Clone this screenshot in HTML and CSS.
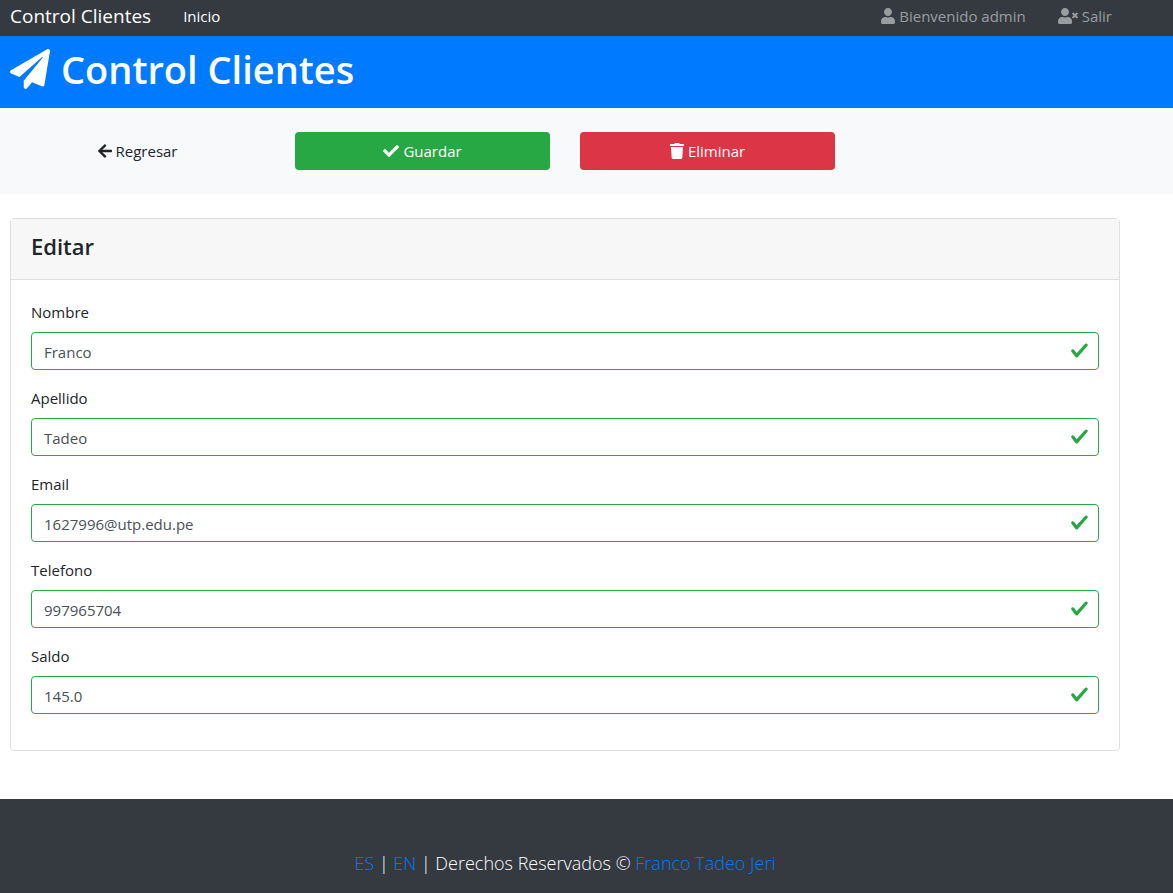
FILE: index.html
```
<!DOCTYPE html>
<html lang="es">
<head>
<meta charset="utf-8">
<title>Control Clientes</title>
<link rel="stylesheet" href="styles.css">
</head>
<body>
<nav class="navbar">
  <div class="container navbar-inner">
    <a class="brand" href="#">Control Clientes</a>
    <a class="nav-link active" href="#">Inicio</a>
    <div class="nav-user">
      <a class="nav-link" href="#"><svg class="icon icon-user" viewBox="0 0 448 512" aria-hidden="true"><path d="M224 256c70.700 0 128-57.300 128-128S294.700 0 224 0 96 57.300 96 128s57.300 128 128 128zm89.600 32h-16.700c-22.200 10.200-46.900 16-72.900 16s-50.600-5.800-72.900-16h-16.700C60.200 288 0 348.200 0 422.400V464c0 26.500 21.500 48 48 48h352c26.500 0 48-21.500 48-48v-41.600c0-74.200-60.200-134.400-134.400-134.400z"/></svg><span>Bienvenido admin</span></a>
      <a class="nav-link" href="#"><svg class="icon icon-exit" viewBox="0 0 640 512" aria-hidden="true"><path d="M589.600 240l45.600-45.600c6.300-6.300 6.300-16.500 0-22.800l-22.800-22.800c-6.300-6.300-16.500-6.300-22.800 0L544 194.400l-45.600-45.600c-6.300-6.300-16.500-6.300-22.800 0l-22.800 22.800c-6.300 6.300-6.300 16.500 0 22.800l45.600 45.600-45.600 45.600c-6.300 6.300-6.300 16.500 0 22.800l22.800 22.800c6.300 6.300 16.500 6.300 22.800 0l45.600-45.600 45.600 45.600c6.300 6.300 16.500 6.300 22.800 0l22.800-22.800c6.300-6.300 6.300-16.500 0-22.800L589.600 240zM224 256c70.700 0 128-57.300 128-128S294.700 0 224 0 96 57.300 96 128s57.300 128 128 128zm89.600 32h-16.700c-22.200 10.200-46.900 16-72.900 16s-50.600-5.800-72.900-16h-16.700C60.200 288 0 348.200 0 422.400V464c0 26.500 21.500 48 48 48h352c26.500 0 48-21.500 48-48v-41.600c0-74.200-60.200-134.400-134.400-134.400z"/></svg><span>Salir</span></a>
    </div>
  </div>
</nav>

<header class="page-header">
  <div class="container">
    <h1 class="title"><svg class="icon icon-plane" viewBox="0 0 512 512" aria-hidden="true"><path d="M476 3.200L12.500 270.600c-18.100 10.400-15.800 35.600 2.200 43.200L121 358.400l287.300-253.200c5.500-4.900 13.300 2.600 8.600 8.300L176 407v80.500c0 23.600 28.500 32.900 42.500 15.800L282 426l124.600 52.200c14.200 6 30.400-2.900 33-18.200l72-432C515 7.800 493.300-6.800 476 3.200z"/></svg><span>Control Clientes</span></h1>
  </div>
</header>

<main>
  <section class="toolbar">
    <div class="container toolbar-grid">
      <a class="btn btn-light" href="#"><svg class="icon icon-arrow" viewBox="0 0 448 512" aria-hidden="true"><path d="M257.500 445.100l-22.200 22.200c-9.400 9.400-24.600 9.400-33.900 0L7 273c-9.400-9.400-9.400-24.600 0-33.900L201.400 44.700c9.400-9.400 24.600-9.400 33.900 0l22.200 22.200c9.500 9.500 9.300 25-.4 34.300L136.600 216H424c13.300 0 24 10.700 24 24v32c0 13.300-10.700 24-24 24H136.600l120.500 114.800c9.800 9.300 10 24.800.4 34.300z"/></svg><span>Regresar</span></a>
      <button class="btn btn-success" type="submit" form="client-form"><svg class="icon icon-check" viewBox="0 0 512 512" aria-hidden="true"><path d="M173.900 439.400l-166.400-166.400c-10-10-10-26.200 0-36.200l36.200-36.200c10-10 26.200-10 36.200 0L192 312.700 432.100 72.600c10-10 26.200-10 36.200 0l36.200 36.200c10 10 10 26.200 0 36.200l-294.400 294.400c-10 10-26.200 10-36.200 0z"/></svg><span>Guardar</span></button>
      <button class="btn btn-danger" type="button"><svg class="icon icon-trash" viewBox="0 0 448 512" aria-hidden="true"><path d="M432 32H312l-9.400-18.700A24 24 0 0 0 281.100 0H166.800a23.700 23.700 0 0 0-21.400 13.300L136 32H16A16 16 0 0 0 0 48v32a16 16 0 0 0 16 16h416a16 16 0 0 0 16-16V48a16 16 0 0 0-16-16zM53.200 467a48 48 0 0 0 47.900 45h245.800a48 48 0 0 0 47.900-45L416 128H32z"/></svg><span>Eliminar</span></button>
    </div>
  </section>

  <section class="container">
    <div class="card">
      <div class="card-header"><h2 class="card-title">Editar</h2></div>
      <form class="card-body" id="client-form">
        <div class="field"><label for="nombre">Nombre</label><input id="nombre" type="text" value="Franco"><svg class="valid-mark" viewBox="0 0 8 8" aria-hidden="true"><path d="M2.300 6.730L.6 4.530c-.4-1.040.46-1.400 1.100-.8l1.100 1.400 3.400-3.800c.6-.63 1.600-.27 1.200.7l-4 4.600c-.43.5-.8.4-1.100.1z"/></svg></div>
        <div class="field"><label for="apellido">Apellido</label><input id="apellido" type="text" value="Tadeo"><svg class="valid-mark" viewBox="0 0 8 8" aria-hidden="true"><path d="M2.300 6.730L.6 4.530c-.4-1.040.46-1.400 1.100-.8l1.100 1.400 3.400-3.800c.6-.63 1.600-.27 1.200.7l-4 4.600c-.43.5-.8.4-1.100.1z"/></svg></div>
        <div class="field"><label for="email">Email</label><input id="email" type="email" value="1627996@utp.edu.pe"><svg class="valid-mark" viewBox="0 0 8 8" aria-hidden="true"><path d="M2.300 6.730L.6 4.530c-.4-1.040.46-1.400 1.100-.8l1.100 1.400 3.400-3.800c.6-.63 1.600-.27 1.200.7l-4 4.600c-.43.5-.8.4-1.100.1z"/></svg></div>
        <div class="field"><label for="telefono">Telefono</label><input id="telefono" type="tel" value="997965704"><svg class="valid-mark" viewBox="0 0 8 8" aria-hidden="true"><path d="M2.300 6.730L.6 4.530c-.4-1.040.46-1.400 1.100-.8l1.100 1.400 3.400-3.800c.6-.63 1.600-.27 1.200.7l-4 4.600c-.43.5-.8.4-1.100.1z"/></svg></div>
        <div class="field"><label for="saldo">Saldo</label><input id="saldo" type="text" value="145.0"><svg class="valid-mark" viewBox="0 0 8 8" aria-hidden="true"><path d="M2.300 6.730L.6 4.530c-.4-1.040.46-1.400 1.100-.8l1.100 1.400 3.400-3.800c.6-.63 1.600-.27 1.200.7l-4 4.600c-.43.5-.8.4-1.100.1z"/></svg></div>
      </form>
    </div>
  </section>
</main>

<footer class="footer">
  <div class="container">
    <p class="lead"><a href="#">ES</a> | <a href="#">EN</a> | Derechos Reservados © <a href="#">Franco Tadeo Jeri</a></p>
  </div>
</footer>
</body>
</html>
```

FILE: styles.css
```
* { box-sizing: border-box; }

body {
  display: flex;
  flex-direction: column;
  min-height: 100vh;
  margin: 0;
  background: #fff;
  color: #212529;
  font: 400 15px/24px "Segoe UI", "Open Sans", "Noto Sans", sans-serif;
}

h1, h2, p { margin: 0; }
a { color: #007bff; text-decoration: none; }

.container { padding: 0 53px 0 10px; }
.icon { flex: none; height: 16px; fill: currentColor; }

/* Navigation */
.navbar { background: #343a40; }
.navbar-inner {
  display: flex;
  align-items: center;
  height: 36px;
  padding-bottom: 4px;
}
.brand { margin-right: 32px; color: #fff; font-size: 19px; }
.nav-link {
  display: flex;
  align-items: center;
  gap: 4px;
  color: #9a9da0;
}
.nav-link.active { color: #fff; }
.nav-user {
  display: flex;
  gap: 32px;
  margin-left: auto;
  padding-right: 8px;
}
.icon-user, .icon-arrow, .icon-trash { width: 14px; }
.icon-exit { width: 20px; }

/* Title band */
.page-header { height: 72px; background: #007bff; color: #fff; }
.title {
  display: flex;
  align-items: center;
  gap: 11px;
  height: 66px;
  font-size: 38px;
  font-weight: 600;
  line-height: 48px;
}
.icon-plane { width: 40px; height: 40px; }

/* Actions */
.toolbar { margin-bottom: 24px; padding: 24px 0; background: #f8f9fa; }
.toolbar-grid {
  display: grid;
  grid-template-columns: repeat(4, 1fr);
  gap: 30px;
}
.btn {
  display: flex;
  align-items: center;
  justify-content: center;
  gap: 4px;
  height: 38px;
  padding: 0 12px;
  border: 0;
  border-radius: 4px;
  color: #fff;
  font: inherit;
}
.btn-light { background: #f8f9fa; color: #212529; }
.btn-success { background: #28a745; }
.btn-danger { background: #dc3545; }
.icon-check { width: 16px; }

/* Edit form */
.card {
  margin-bottom: 48px;
  border: 1px solid #dfdfdf;
  border-radius: 4px;
}
.card-header {
  padding: 11px 20px 17px;
  border-bottom: 1px solid #dfdfdf;
  background: #f7f7f7;
}
.card-title { font-size: 22px; font-weight: 600; line-height: 32px; }
.card-body { padding: 20px; }
.field { position: relative; margin-bottom: 16px; }
.field label { display: block; margin-bottom: 8px; }
.field input {
  display: block;
  width: 100%;
  height: 38px;
  padding: 2px 36px 0 12px;
  border: 1px solid #28a745;
  border-radius: 4px;
  background: #fff;
  color: #495057;
  font: inherit;
}
.valid-mark {
  position: absolute;
  right: 10px;
  bottom: 10px;
  width: 19px;
  height: 19px;
  fill: #28a745;
}

/* Footer */
.footer {
  flex: 1;
  padding: 49px 0 14px;
  background: #343a40;
  color: #fff;
}
.lead {
  font-size: 18px;
  font-weight: 300;
  line-height: 30px;
  text-align: center;
}
```
